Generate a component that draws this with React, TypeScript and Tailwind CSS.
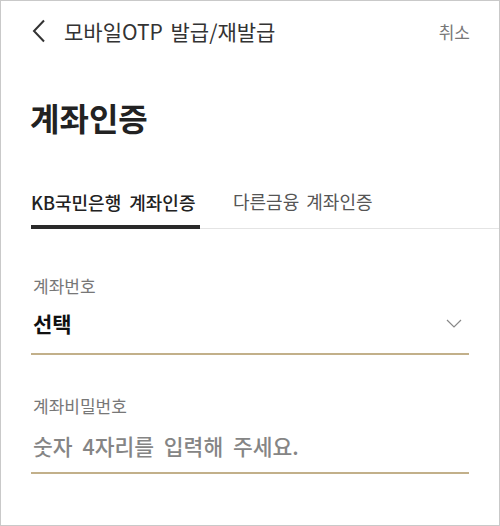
import React from 'react';

const font = { fontFamily: '"Noto Sans CJK KR", "Noto Sans", sans-serif' };

export default function App() {
  return (
    <div
      className="w-[500px] h-[526px] bg-white border border-[#c9c9c9] text-[#222] overflow-hidden"
      style={font}
    >
      {/* Header */}
      <div className="h-[60px] flex items-center pl-[31px] pr-[29px]">
        <svg width="14" height="24" viewBox="0 0 14 24" className="shrink-0">
          <path d="M12 1.5 L2 12 L12 22.5" fill="none" stroke="#333" strokeWidth="2" />
        </svg>
        <span className="ml-[18px] text-[21px] text-[#333] leading-none [word-spacing:3px]">
          모바일OTP 발급/재발급
        </span>
        <span className="ml-auto text-[17px] text-[#777] leading-none">취소</span>
      </div>

      {/* Title */}
      <h1 className="px-[29px] mt-[40px] text-[32px] font-bold text-[#222] leading-none">
        계좌인증
      </h1>

      {/* Tabs */}
      <div className="mt-[57px] flex items-end border-b border-[#e4e4e4] ml-[30px]">
        <div className="w-[169px] pb-[10px] border-b-4 border-[#2a2a2a] -mb-px">
          <span className="text-[18px] text-[#222] font-medium leading-none [word-spacing:4px]">
            KB국민은행 계좌인증
          </span>
        </div>
        <div className="pb-[14px] ml-[33px]">
          <span className="text-[18px] text-[#555] leading-none [word-spacing:3px]">다른금융 계좌인증</span>
        </div>
      </div>

      {/* Account number */}
      <div className="px-[30px] mt-[48px]">
        <div className="text-[17px] text-[#777] leading-none pl-[2px]">계좌번호</div>
        <div className="mt-[19px] flex items-center pb-[19px] border-b-2 border-[#c2b08a]">
          <span className="text-[21px] font-bold text-[#111] leading-none pl-[2px]">선택</span>
          <svg width="16" height="9" viewBox="0 0 16 9" className="ml-auto mr-[7px]">
            <path d="M1 1 L8 8 L15 1" fill="none" stroke="#888" strokeWidth="1.2" />
          </svg>
        </div>
      </div>

      {/* Password */}
      <div className="px-[30px] mt-[42px]">
        <div className="text-[17px] text-[#777] leading-none pl-[2px]">계좌비밀번호</div>
        <div className="mt-[21px] pb-[12px] border-b-2 border-[#c2b08a]">
          <span className="text-[21.5px] font-medium text-[#858585] leading-none pl-[2px] [word-spacing:5px]">
            숫자 4자리를 입력해 주세요.
          </span>
        </div>
      </div>
    </div>
  );
}
